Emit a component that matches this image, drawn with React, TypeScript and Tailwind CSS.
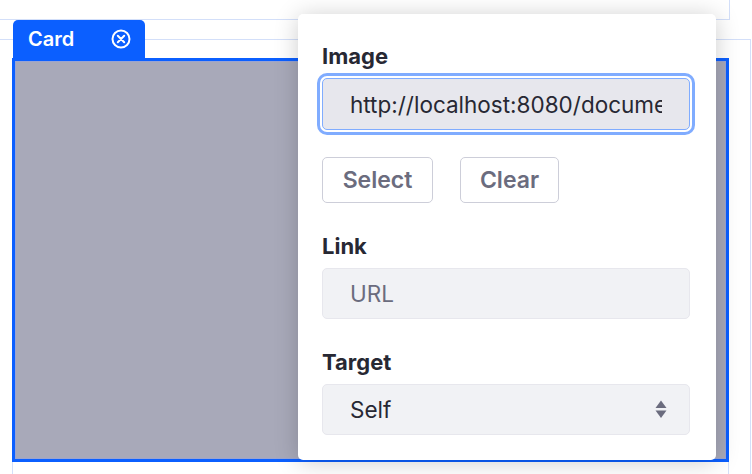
import React from 'react';

// Small circled "x" used on the card tab
function CloseIcon() {
  return (
    <svg width="20" height="20" viewBox="0 0 20 20" fill="none" stroke="currentColor" strokeWidth="2" strokeLinecap="round">
      <circle cx="10" cy="10" r="8.5" />
      <path d="M6.8 6.8l6.4 6.4M13.2 6.8l-6.4 6.4" />
    </svg>
  );
}

// Up/down caret pair on the select
function SortIcon() {
  return (
    <svg width="12" height="19" viewBox="0 0 12 19" fill="#6b6c7e">
      <path d="M6 0.5L11.5 8H0.5Z" />
      <path d="M0.5 10.5H11.5L6 18Z" />
    </svg>
  );
}

function Label({ children }: { children: React.ReactNode }) {
  return <div className="mb-[9px] text-[22px] leading-[26px] font-bold text-[#272833]">{children}</div>;
}

function Popover() {
  return (
    <div className="absolute left-[298px] top-[14px] w-[418px] rounded-[5px] bg-white pt-[29px] pb-[25px] pl-6 pr-[26px] shadow-[0_2px_24px_rgba(0,0,0,0.2)]">
      <Label>Image</Label>
      <input
        readOnly
        value="http://localhost:8080/documents/20121/0/card.png"
        className="block h-[52px] w-[368px] rounded-[5px] border border-[#80acff] bg-[#e7e7ed] px-[27px] text-[22.5px] text-[#272833] shadow-[0_0_0_2px_#fff,0_0_0_5px_#80acff] outline-none"
      />

      {/* Image actions */}
      <div className="mt-[27px] flex gap-[27px]">
        <button className="h-[46px] w-[111px] rounded-[5px] border border-[#cdced9] bg-white text-[23px] font-semibold text-[#6b6c7e]">
          Select
        </button>
        <button className="h-[46px] w-[99px] rounded-[5px] border border-[#cdced9] bg-white text-[23px] font-semibold text-[#6b6c7e]">
          Clear
        </button>
      </div>

      <div className="mt-[30px]">
        <Label>Link</Label>
        <input
          placeholder="URL"
          className="block h-[51px] w-[368px] rounded-[5px] border border-[#e7e7ed] bg-[#f1f2f5] px-[27px] text-[22.5px] text-[#272833] placeholder:text-[#6b6c7e] outline-none"
        />
      </div>

      <div className="mt-[30px]">
        <Label>Target</Label>
        <div className="flex h-[51px] w-[368px] items-center justify-between rounded-[5px] border border-[#e7e7ed] bg-[#f1f2f5] pl-[27px] pr-[22px] text-[22.5px] text-[#272833]">
          <span>Self</span>
          <SortIcon />
        </div>
      </div>
    </div>
  );
}

export default function App() {
  return (
    <div className="relative h-[474px] w-[752px] overflow-hidden bg-white font-[Inter,sans-serif]">
      {/* fragment above, cut off by the viewport */}
      <div className="h-[20px] w-[730px] border-b border-r border-[#d3dff9]" />

      {/* row holding the card */}
      <div className="mt-[19px] h-[480px] w-[751px] border-t border-r border-[#d3dff9] pl-[12px]">
        <div className="-mt-[20px] flex w-[717px] flex-col">
          <div className="ml-px flex h-[38px] w-[132px] items-center justify-between rounded-t-[5px] bg-[#0b5fff] pl-[15px] pr-[14px] text-white">
            <span className="text-[20px] font-semibold">Card</span>
            <CloseIcon />
          </div>
          <div className="h-[404px] border-[3px] border-[#0b5fff]">
            <div className="h-full border border-[#9aa4d2] bg-[#a8a9b9]" />
          </div>
          <div className="h-[20px] border-x border-[#d3dff9]" />
        </div>
      </div>

      <Popover />
    </div>
  );
}
